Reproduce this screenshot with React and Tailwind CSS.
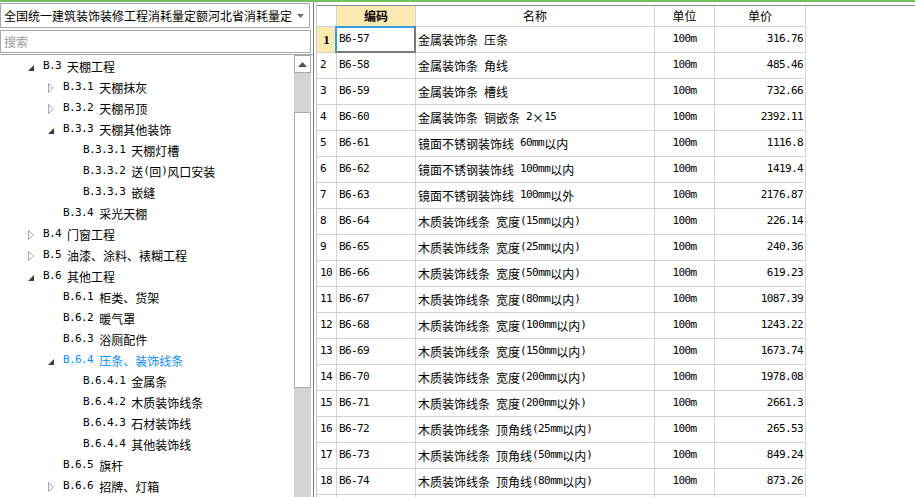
import React from "react";

const cjk = "font-['Noto_Sans_CJK_SC',sans-serif]";

// SimSun-like look: ASCII runs in a narrow mono face, CJK in Noto Sans CJK
const Txt = ({ s }) =>
  String(s)
    .split(/([\x20-\x7e]+)/)
    .filter((p) => p !== "")
    .map((p, i) =>
      /^[\x20-\x7e]+$/.test(p) ? (
        <span key={i} className="font-['DejaVu_Sans_Mono',monospace] text-[11px] tracking-[-0.6px] whitespace-pre">
          {p}
        </span>
      ) : (
        <span key={i}>{p}</span>
      )
    );

const tree = [
  { lv: 0, icon: "open", t: "B.3 天棚工程" },
  { lv: 1, icon: "closed", t: "B.3.1 天棚抹灰" },
  { lv: 1, icon: "closed", t: "B.3.2 天棚吊顶" },
  { lv: 1, icon: "open", t: "B.3.3 天棚其他装饰" },
  { lv: 2, t: "B.3.3.1 天棚灯槽" },
  { lv: 2, t: "B.3.3.2 送(回)风口安装" },
  { lv: 2, t: "B.3.3.3 嵌缝" },
  { lv: 1, t: "B.3.4 采光天棚" },
  { lv: 0, icon: "closed", t: "B.4 门窗工程" },
  { lv: 0, icon: "closed", t: "B.5 油漆、涂料、裱糊工程" },
  { lv: 0, icon: "open", t: "B.6 其他工程" },
  { lv: 1, t: "B.6.1 柜类、货架" },
  { lv: 1, t: "B.6.2 暖气罩" },
  { lv: 1, t: "B.6.3 浴厕配件" },
  { lv: 1, icon: "open", t: "B.6.4 压条、装饰线条", active: true },
  { lv: 2, t: "B.6.4.1 金属条" },
  { lv: 2, t: "B.6.4.2 木质装饰线条" },
  { lv: 2, t: "B.6.4.3 石材装饰线" },
  { lv: 2, t: "B.6.4.4 其他装饰线" },
  { lv: 1, t: "B.6.5 旗杆" },
  { lv: 1, icon: "closed", t: "B.6.6 招牌、灯箱" },
];

const rows = [
  ["B6-57", "金属装饰条 压条", "316.76"],
  ["B6-58", "金属装饰条 角线", "485.46"],
  ["B6-59", "金属装饰条 槽线", "732.66"],
  ["B6-60", "金属装饰条 铜嵌条 2×15", "2392.11"],
  ["B6-61", "镜面不锈钢装饰线 60mm以内", "1116.8"],
  ["B6-62", "镜面不锈钢装饰线 100mm以内", "1419.4"],
  ["B6-63", "镜面不锈钢装饰线 100mm以外", "2176.87"],
  ["B6-64", "木质装饰线条 宽度(15mm以内)", "226.14"],
  ["B6-65", "木质装饰线条 宽度(25mm以内)", "240.36"],
  ["B6-66", "木质装饰线条 宽度(50mm以内)", "619.23"],
  ["B6-67", "木质装饰线条 宽度(80mm以内)", "1087.39"],
  ["B6-68", "木质装饰线条 宽度(100mm以内)", "1243.22"],
  ["B6-69", "木质装饰线条 宽度(150mm以内)", "1673.74"],
  ["B6-70", "木质装饰线条 宽度(200mm以内)", "1978.08"],
  ["B6-71", "木质装饰线条 宽度(200mm以外)", "2661.3"],
  ["B6-72", "木质装饰线条 顶角线(25mm以内)", "265.53"],
  ["B6-73", "木质装饰线条 顶角线(50mm以内)", "849.24"],
  ["B6-74", "木质装饰线条 顶角线(80mm以内)", "873.26"],
];

const pad = ["pl-[28px]", "pl-[48px]", "pl-[68px]"];

const TreeIcon = ({ kind }) => {
  if (kind === "open")
    return (
      <svg width="6" height="6" viewBox="0 0 6 6" className="mt-[3px]">
        <polygon points="6,0 6,6 0,6" fill="#3c3c3c" />
      </svg>
    );
  if (kind === "closed")
    return (
      <svg width="6" height="10" viewBox="0 0 6 10">
        <polygon points="0.5,0.5 5.3,5 0.5,9.5" fill="white" stroke="#a6a6a6" />
      </svg>
    );
  return null;
};

const cell = "border-r border-b border-[#d4d4d4] flex items-center";

export default function App() {
  return (
    <div className={`w-[915px] h-[497px] overflow-hidden bg-white flex flex-col text-[12px] text-black ${cjk}`}>
      <div className="h-[2px] bg-[#72c35e] shrink-0" />
      <div className="flex flex-1 min-h-0">
        {/* left panel */}
        <div className="w-[313px] shrink-0 flex flex-col pt-[1px]">
          <div className="h-[25px] w-[310px] border border-[#a9a9a9] flex items-center pl-[3px] pr-[5px]">
            <div className="flex-1 overflow-hidden whitespace-nowrap">全国统一建筑装饰装修工程消耗量定额河北省消耗量定额</div>
            <svg width="7" height="4" viewBox="0 0 7 4" className="ml-[5px] shrink-0">
              <polygon points="0,0 7,0 3.5,4" fill="#6b6b6b" />
            </svg>
          </div>
          <div className="h-[23px] w-[311px] mt-[2px] border border-[#a9a9a9] flex items-center pl-[3px] text-[#9a9a9a]">
            搜索
          </div>
          <div className="flex-1 min-h-0 mt-[1px] border-t border-[#a9a9a9] flex">
            <div className="w-[294px] pt-[1px] overflow-hidden">
              {tree.map((n, i) => (
                <div
                  key={i}
                  className={`h-[21px] flex items-center whitespace-nowrap ${pad[n.lv]} ${n.active ? "text-[#0a8cff]" : ""}`}
                >
                  <div className="w-[15px] shrink-0 flex items-center">
                    <TreeIcon kind={n.icon} />
                  </div>
                  <Txt s={n.t} />
                </div>
              ))}
            </div>
            {/* scrollbar */}
            <div className="w-[17px] flex flex-col bg-[#d4d4d4]">
              <div className="h-[18px] bg-white border border-[#a9a9a9] flex items-center justify-center">
                <svg width="9" height="5" viewBox="0 0 9 5">
                  <polygon points="0,5 9,5 4.5,0" fill="#555" />
                </svg>
              </div>
              <div className="h-[39px]" />
              <div className="h-[276px] bg-white border border-[#a9a9a9]" />
            </div>
          </div>
        </div>

        {/* splitter */}
        <div className="w-[3px] shrink-0 border-l border-[#7a7a7a]" />

        {/* right grid */}
        <div className="flex-1 border-l border-[#c8c8c8] pt-[3px]">
          <div className="border-t border-[#8c8c8c]">
            <div className="flex h-[21px]">
              <div className={`${cell} w-[20px]`} />
              <div className={`${cell} w-[79px] justify-center font-bold bg-[#fdeab0]`}>编码</div>
              <div className={`${cell} w-[239px] justify-center`}>名称</div>
              <div className={`${cell} w-[60px] justify-center`}>单位</div>
              <div className={`${cell} w-[91px] justify-center`}>单价</div>
            </div>
            {rows.map((r, i) => (
              <div key={i} className="flex h-[26px]">
                <div
                  className={`${cell} w-[20px] ${
                    i === 0 ? "bg-[#fdeab0] justify-center font-bold font-['Liberation_Serif',serif] text-[13px]" : "pl-[3px]"
                  }`}
                >
                  {i === 0 ? "1" : <Txt s={String(i + 1)} />}
                </div>
                <div className={`${cell} w-[79px] pl-[2px] relative`}>
                  <Txt s={r[0]} />
                  {i === 0 && (
                    <div className="absolute left-[-2px] top-[-1px] right-[-1px] bottom-[-1px] border-2 border-[#7a7a7a] border-l-[#2fa0dc] border-t-[#2fa0dc]" />
                  )}
                </div>
                <div className={`${cell} w-[239px] pl-[2px] whitespace-nowrap`}>
                  <Txt s={r[1]} />
                </div>
                <div className={`${cell} w-[60px] justify-center`}>
                  <Txt s="100m" />
                </div>
                <div className={`${cell} w-[91px] justify-end pr-[2px]`}>
                  <Txt s={r[2]} />
                </div>
              </div>
            ))}
            <div className="flex h-[26px]">
              <div className={`${cell} w-[20px]`} />
              <div className={`${cell} w-[79px]`} />
              <div className={`${cell} w-[239px]`} />
              <div className={`${cell} w-[60px]`} />
              <div className={`${cell} w-[91px]`} />
            </div>
          </div>
        </div>
      </div>
    </div>
  );
}
